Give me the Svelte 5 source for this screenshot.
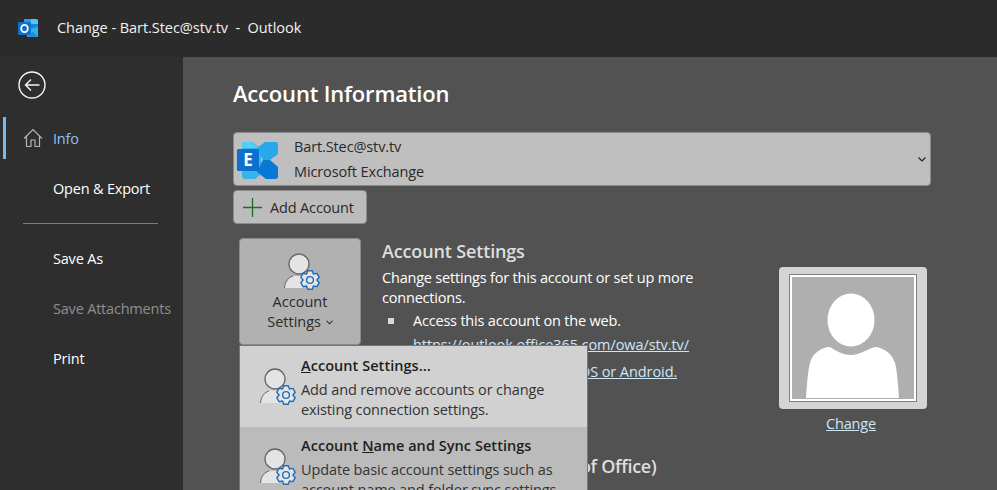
<script>
  const nav = [
    { label: 'Open & Export' },
  ];
  const gearPts = (() => {
    const cx = 27, cy = 28, pts = [];
    for (let i = 0; i < 6; i++) {
      const a = (i * Math.PI) / 3;
      for (const [d, r] of [[-0.52, 6.9], [-0.24, 9.6], [0.24, 9.6], [0.52, 6.9]]) {
        pts.push(`${(cx + r * Math.sin(a + d)).toFixed(2)},${(cy - r * Math.cos(a + d)).toFixed(2)}`);
      }
    }
    return pts.join(' ');
  })();
</script>

{#snippet personGear()}
  <svg class="pg" viewBox="0 0 38 38" width="38" height="38" aria-hidden="true">
    <path d="M1.5 36 C2 29 6 25 11 24 L20 24 L20 36 Z" fill="#e4e4e4" />
    <path d="M1.5 36 C2 29 6 25 10 24" fill="none" stroke="#666" stroke-width="1" />
    <circle cx="16" cy="12" r="10" fill="#e4e4e4" stroke="#666" stroke-width="1.3" />
    <polygon points={gearPts} fill="#e4e4e4" stroke="#1d6fb8" stroke-width="1.4" stroke-linejoin="round" />
    <circle cx="27" cy="28" r="3.4" fill="none" stroke="#1d6fb8" stroke-width="1.4" />
  </svg>
{/snippet}

<div class="window">
  <header class="titlebar">
    <svg class="logo" viewBox="0 0 21 20" width="21" height="20" aria-hidden="true">
      <path d="M6 1 H18 Q20 1 20 3 V10 H6 Z" fill="#2a9fe8" />
      <path d="M13 1 H18 Q20 1 20 3 V7 H13 Z" fill="#55c6f2" />
      <path d="M6 6 H20 V12 H6 Z" fill="#1a86d8" />
      <path d="M9 12 L20 9 V19 H9 Z" fill="#34b0ee" />
      <path d="M9 19 L15 13.5 L20 19 Z" fill="#1e8fdf" />
      <rect x="0" y="4" width="13" height="13" rx="1.2" fill="#0e6fce" />
      <ellipse cx="6.5" cy="10.5" rx="3.3" ry="3.6" fill="none" stroke="#fff" stroke-width="1.8" />
    </svg>
    <span class="title">Change - Bart.Stec@stv.tv&nbsp; - &nbsp;Outlook</span>
  </header>

  <div class="body">
    <nav class="side">
      <svg class="back" viewBox="0 0 28 28" width="28" height="28" aria-hidden="true">
        <circle cx="14" cy="14" r="13" fill="none" stroke="#f5f5f5" stroke-width="1.4" />
        <path d="M21.5 14 H7.5 M13 8.5 L7.5 14 L13 19.5" fill="none" stroke="#f5f5f5" stroke-width="1.4" />
      </svg>
      <a class="item active">
        <svg viewBox="0 0 20 20" width="20" height="20" aria-hidden="true">
          <path d="M1 10.5 L10 1.5 L19 10.5 M3.5 8.5 V18.5 H8 V12 H12 V18.5 H16.5 V8.5" fill="none" stroke="#b5b5b5" stroke-width="1.2" />
        </svg>
        Info
      </a>
      {#each nav as n}
        <a class="item">{n.label}</a>
      {/each}
      <hr />
      <a class="item">Save As</a>
      <a class="item dim">Save Attachments</a>
      <a class="item">Print</a>
    </nav>

    <main class="main">
      <h1>Account Information</h1>

      <div class="picker">
        <svg class="exch" viewBox="0 0 42 38" width="42" height="38" aria-hidden="true">
          <path d="M5 3 Q5 1 7 1 H15 L25 8 L24 19 L27 31 L18 38 H8 Q5 38 5 35 Z" fill="#36b4ec" />
          <path d="M5 1 H14 L22 7 H5 Z" fill="#4fd0f5" />
          <path d="M20 7 L28 1 H39 Q41 1 41 3 V13 L33 19 H26 Z" fill="#28a8ea" />
          <path d="M26 19 H33 L41 26 V35 Q41 38 38 38 H29 L20 31 Z" fill="#0778d4" />
          <rect x="0" y="8" width="22" height="22" rx="1.5" fill="#0e6fce" />
          <text class="e" x="11" y="25" text-anchor="middle">E</text>
        </svg>
        <div class="picker-text">
          <span>Bart.Stec@stv.tv</span>
          <span>Microsoft Exchange</span>
        </div>
        <svg class="chev" viewBox="0 0 8 5" width="8" height="5" aria-hidden="true">
          <path d="M.5 .5 L4 4 L7.5 .5" fill="none" stroke="#222" stroke-width="1.2" />
        </svg>
      </div>

      <button class="add">
        <svg viewBox="0 0 19 19" width="19" height="19" aria-hidden="true">
          <path d="M9.5 0 V19 M0 9.5 H19" stroke="#1f6b2c" stroke-width="1.3" />
        </svg>
        Add Account
      </button>

      <section class="settings">
        <div class="tile-wrap">
          <button class="tile">
            {@render personGear()}
            <span>Account<br />Settings <svg class="mini" viewBox="0 0 8 5" width="7" height="5" aria-hidden="true"><path d="M.5 .5 L4 4 L7.5 .5" fill="none" stroke="#222" stroke-width="1.2" /></svg></span>
          </button>

          <div class="menu">
            <div class="menu-item first">
              {@render personGear()}
              <div>
                <b><u>A</u>ccount Settings...</b>
                <p>Add and remove accounts or change existing connection settings.</p>
              </div>
            </div>
            <div class="menu-item">
              {@render personGear()}
              <div>
                <b>Account <u>N</u>ame and Sync Settings</b>
                <p>Update basic account settings such as account name and folder sync settings.</p>
              </div>
            </div>
          </div>
        </div>

        <div class="details">
          <h2>Account Settings</h2>
          <p class="lead">Change settings for this account or set up more connections.</p>
          <ul>
            <li>Access this account on the web.
              <a href="#a">https://outlook.office365.com/owa/stv.tv/</a>
              <a href="#b">Get the Outlook app for iOS or Android.</a>
            </li>
          </ul>
          <h2 class="auto">Automatic Replies (Out of Office)</h2>
          <p class="lead clip">Use automatic replies to notify others that you are out of office, on vacation, or not available.</p>
        </div>

        <div class="photo">
          <div class="frame">
            <div class="inner">
              <svg viewBox="0 0 120 120" preserveAspectRatio="none" aria-hidden="true">
                <ellipse cx="58" cy="42" rx="23.5" ry="26.5" fill="#fff" />
                <path d="M13 120 C14 105 15 92 17 85 C19 76 28 69 37 69 C44 73 49 77 58 77 C67 77 74 71 82 69 C92 70 99 76 102 85 C104 92 105 105 106 120 Z" fill="#fff" />
              </svg>
            </div>
          </div>
          <a href="#c">Change</a>
        </div>
      </section>
    </main>
  </div>
</div>

<style>
  :global(body) {
    margin: 0;
    background: #2e2e2e;
  }
  .window {
    width: 997px;
    height: 490px;
    overflow: hidden;
    display: flex;
    flex-direction: column;
    font-family: "Open Sans", "Noto Sans", sans-serif;
    font-size: 14.5px;
    color: #fff;
  }
  .titlebar {
    height: 57px;
    flex: none;
    display: flex;
    align-items: center;
    background: #2b2b2b;
    padding: 0 0 2px 18px;
    box-sizing: border-box;
  }
  .title {
    margin-left: 18px;
    font-size: 14.5px;
    letter-spacing: -0.05px;
    color: #f2f2f2;
  }
  .body {
    flex: 1;
    display: flex;
    min-height: 0;
  }
  .side {
    width: 183px;
    flex: none;
    background: #2e2e2e;
    display: flex;
    flex-direction: column;
    padding-top: 14px;
    box-sizing: border-box;
  }
  .back {
    margin: 0 0 14px 18px;
    flex: none;
  }
  .item {
    height: 50px;
    flex: none;
    display: flex;
    align-items: center;
    padding-left: 53px;
    box-sizing: border-box;
    color: #fff;
    font-size: 14.5px;
    letter-spacing: -0.2px;
    position: relative;
  }
  .item.active {
    color: #8cc1ee;
    padding-left: 23px;
    gap: 10px;
  }
  .item.active::before {
    content: "";
    position: absolute;
    left: 3px;
    top: 4px;
    bottom: 4px;
    width: 3px;
    background: #79b8ec;
  }
  .item.dim { color: #8f8f8f; }
  hr {
    width: 135px;
    margin: 10px 0 9px 23px;
    border: 0;
    border-top: 1px solid #7c7c7c;
  }
  .main {
    flex: 1;
    background: #525252;
    padding: 0 0 0 50px;
    min-width: 0;
  }
  h1 {
    margin: 20px 0 0;
    font-size: 22px;
    line-height: 32px;
    font-weight: 600;
    letter-spacing: -0.18px;
    color: #fff;
  }
  .picker {
    width: 698px;
    height: 54px;
    margin-top: 23px;
    box-sizing: border-box;
    border: 1px solid #8a8a8a;
    border-radius: 4px;
    background: #bfbfbf;
    display: flex;
    align-items: center;
    color: #2a2a2a;
    position: relative;
    padding-left: 3px;
  }
  .exch {
    flex: none;
    margin-top: 2px;
  }
  .e {
    font-size: 17px;
    font-weight: 700;
    fill: #fff;
    font-family: "Open Sans", sans-serif;
  }
  .picker-text {
    margin-left: 15px;
    display: flex;
    flex-direction: column;
    font-size: 14.5px;
    line-height: 25px;
    letter-spacing: -0.12px;
  }
  .chev {
    position: absolute;
    right: 4px;
    top: 24px;
  }
  button {
    font: inherit;
    color: #2a2a2a;
    cursor: pointer;
  }
  .add {
    display: flex;
    align-items: center;
    gap: 8px;
    width: 134px;
    height: 34px;
    margin-top: 4px;
    padding: 0 0 0 9px;
    box-sizing: border-box;
    background: #bcbcbc;
    border: 1px solid #8c8c8c;
    border-radius: 4px;
    font-size: 14.5px;
    letter-spacing: -0.15px;
  }
  .settings {
    display: flex;
    align-items: flex-start;
    margin-top: 14px;
    padding-left: 6px;
  }
  .tile-wrap {
    position: relative;
    flex: none;
    width: 122px;
  }
  .tile {
    width: 122px;
    height: 107px;
    box-sizing: border-box;
    background: #b1b1b1;
    border: 1px solid #8a8a8a;
    border-radius: 4px;
    display: flex;
    flex-direction: column;
    align-items: center;
    padding: 13px 0 0;
    font-size: 14.5px;
    line-height: 20px;
    letter-spacing: 0;
    text-align: center;
  }
  .tile .pg { margin: 0 0 2px 3px; flex: none; }
  .mini { vertical-align: 2px; margin-left: 1px; }
  .menu {
    position: absolute;
    left: 1px;
    top: 108px;
    width: 347px;
    height: 200px;
    background: #bbb;
    z-index: 2;
    color: #222;
    box-shadow: 0 0 0 1px #777;
  }
  .menu-item {
    height: 80px;
    box-sizing: border-box;
    display: flex;
    padding: 8px 8px 0 19px;
    gap: 4px;
    background: #bbb;
  }
  .menu-item.first { background: #d1d1d1; height: 81px; padding-top: 9px; }
  .menu-item .pg { flex: none; margin-top: 12px; }
  .menu-item b {
    display: block;
    font-size: 14.5px;
    font-weight: 600;
    line-height: 21px;
    letter-spacing: 0.05px;
    color: #1e1e1e;
  }
  .menu-item p {
    margin: 4px 0 0;
    font-size: 14.5px;
    line-height: 20px;
    letter-spacing: -0.12px;
    color: #333;
  }
  .details {
    width: 336px;
    margin-left: 21px;
    flex: none;
    color: #fff;
  }
  h2 {
    margin: 0;
    font-size: 18px;
    line-height: 26px;
    font-weight: 600;
    letter-spacing: -0.15px;
    color: #dedede;
  }
  .lead {
    margin: 4px 0 0;
    font-size: 14.5px;
    line-height: 20px;
    letter-spacing: -0.2px;
  }
  ul {
    list-style: none;
    margin: 3px 0 0;
    padding: 0 0 0 31px;
    position: relative;
  }
  ul::before {
    content: "";
    position: absolute;
    left: 6px;
    top: 7px;
    width: 6px;
    height: 6px;
    background: #d8d8d8;
  }
  li {
    font-size: 14.5px;
    line-height: 20px;
    letter-spacing: -0.2px;
  }
  li a {
    display: block;
    white-space: nowrap;
    margin-top: 4px;
    color: #cfe6f8;
    text-decoration: underline;
    letter-spacing: -0.08px;
  }
  li a + a { margin-top: 7px; }
  .auto {
    margin-top: 71px;
    white-space: nowrap;
    letter-spacing: -0.3px;
  }
  .clip { white-space: nowrap; margin-top: 10px; }
  .photo {
    flex: none;
    margin: 29px 0 0 61px;
    display: flex;
    flex-direction: column;
    align-items: center;
    width: 148px;
  }
  .frame {
    width: 148px;
    height: 142px;
    box-sizing: border-box;
    background: #d4d4d4;
    border-radius: 4px;
    padding: 7px 10px 7px 10px;
  }
  .inner {
    height: 100%;
    box-sizing: border-box;
    border: 1px solid #7f7f7f;
    outline: 2px solid #fff;
    outline-offset: -3px;
    background: #afafaf;
    padding: 3px;
    overflow: hidden;
  }
  .inner svg { display: block; width: 100%; height: 100%; }
  .photo a {
    margin-top: 5px;
    font-size: 14.5px;
    line-height: 20px;
    color: #cfe6f8;
    letter-spacing: -0.2px;
    margin-right: 4px;
  }
</style>
